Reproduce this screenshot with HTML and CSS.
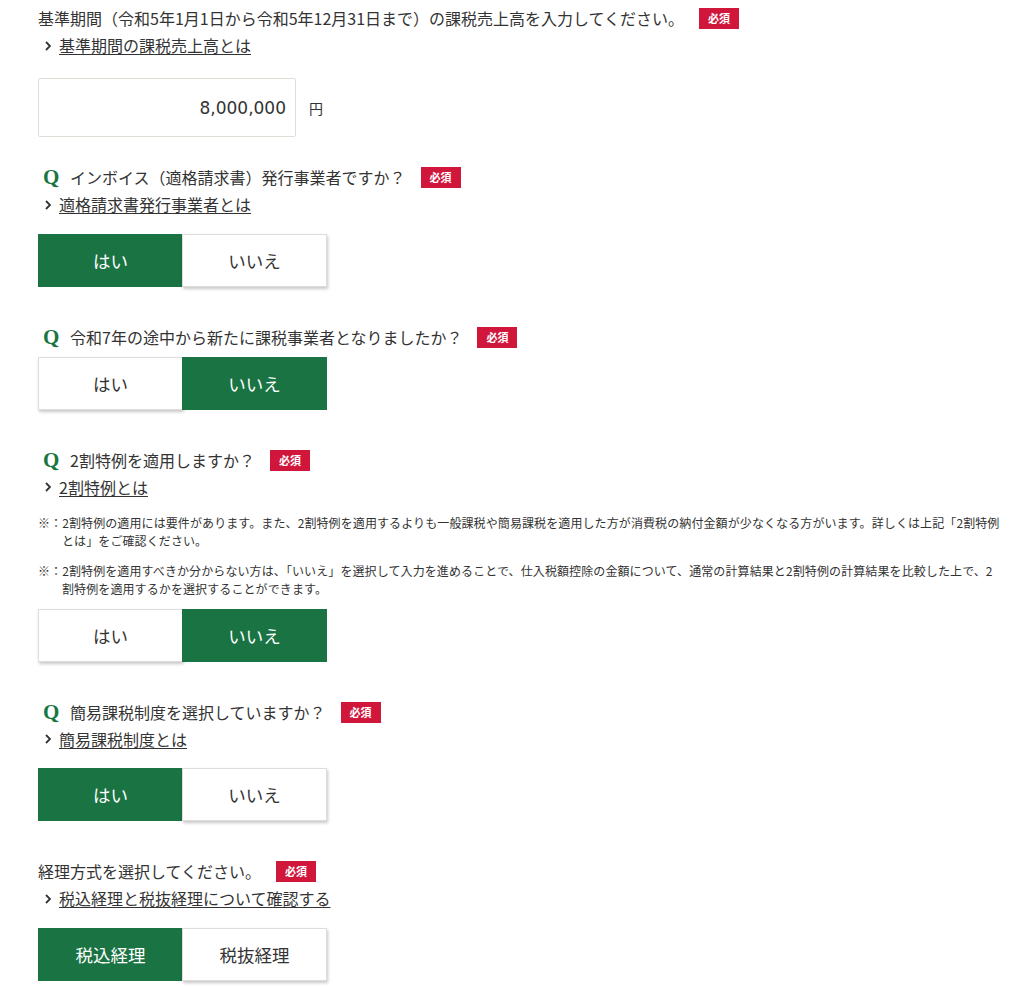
FILE: index.html
```html
<!DOCTYPE html>
<html>
<head>
    <title>消費税 入力</title>
    <link rel="stylesheet" href="styles.css">
</head>
<body>
    <div class="page">
        <div class="field first">
            <p class="label"><span>基準期間（令和5年1月1日から令和5年12月31日まで）の課税売上高を入力してください。</span><span class="badge">必須</span></p>
            <p class="more"><svg class="chev" width="6" height="10" viewBox="0 0 6 10"><polyline points="1,1 5,5 1,9" fill="none" stroke="#333" stroke-width="1.8"/></svg><a href="#">基準期間の課税売上高とは</a></p>
            <div class="amount">
                <input type="text" class="amount-input" value="8,000,000">
                <span class="unit">円</span>
            </div>
        </div>

        <div class="field gap-small">
            <p class="label"><span class="q">Q</span><span>インボイス（適格請求書）発行事業者ですか？</span><span class="badge">必須</span></p>
            <p class="more"><svg class="chev" width="6" height="10" viewBox="0 0 6 10"><polyline points="1,1 5,5 1,9" fill="none" stroke="#333" stroke-width="1.8"/></svg><a href="#">適格請求書発行事業者とは</a></p>
            <div class="choices">
                <button class="choice selected">はい</button>
                <button class="choice">いいえ</button>
            </div>
        </div>

        <div class="field">
            <p class="label"><span class="q">Q</span><span>令和7年の途中から新たに課税事業者となりましたか？</span><span class="badge">必須</span></p>
            <div class="choices">
                <button class="choice">はい</button>
                <button class="choice selected">いいえ</button>
            </div>
        </div>

        <div class="field">
            <p class="label"><span class="q">Q</span><span>2割特例を適用しますか？</span><span class="badge">必須</span></p>
            <p class="more"><svg class="chev" width="6" height="10" viewBox="0 0 6 10"><polyline points="1,1 5,5 1,9" fill="none" stroke="#333" stroke-width="1.8"/></svg><a href="#">2割特例とは</a></p>
            <div class="notes">
                <p class="note">※：2割特例の適用には要件があります。また、2割特例を適用するよりも一般課税や簡易課税を適用した方が消費税の納付金額が少なくなる方がいます。詳しくは上記「2割特例とは」をご確認ください。</p>
                <p class="note">※：2割特例を適用すべきか分からない方は、「いいえ」を選択して入力を進めることで、仕入税額控除の金額について、通常の計算結果と2割特例の計算結果を比較した上で、2割特例を適用するかを選択することができます。</p>
            </div>
            <div class="choices">
                <button class="choice">はい</button>
                <button class="choice selected">いいえ</button>
            </div>
        </div>

        <div class="field">
            <p class="label"><span class="q">Q</span><span>簡易課税制度を選択していますか？</span><span class="badge">必須</span></p>
            <p class="more"><svg class="chev" width="6" height="10" viewBox="0 0 6 10"><polyline points="1,1 5,5 1,9" fill="none" stroke="#333" stroke-width="1.8"/></svg><a href="#">簡易課税制度とは</a></p>
            <div class="choices">
                <button class="choice selected">はい</button>
                <button class="choice">いいえ</button>
            </div>
        </div>

        <div class="field">
            <p class="label"><span>経理方式を選択してください。</span><span class="badge">必須</span></p>
            <p class="more"><svg class="chev" width="6" height="10" viewBox="0 0 6 10"><polyline points="1,1 5,5 1,9" fill="none" stroke="#333" stroke-width="1.8"/></svg><a href="#">税込経理と税抜経理について確認する</a></p>
            <div class="choices">
                <button class="choice selected">税込経理</button>
                <button class="choice">税抜経理</button>
            </div>
        </div>
    </div>
</body>
</html>
```

FILE: styles.css
```css
body {
    margin: 0;
    font-family: "Noto Sans CJK JP", "Noto Sans", sans-serif;
    color: #333;
    background-color: #fff;
}
p {
    margin: 0;
}
.page {
    padding: 5px 22px 20px 38px;
}
.field {
    margin-top: 37px;
}
.field.first {
    margin-top: 0;
}
.field.gap-small {
    margin-top: 27px;
}
.label {
    display: flex;
    align-items: center;
    font-size: 16px;
    line-height: 27px;
}
.q {
    width: 27px;
    padding-left: 5px;
    color: #1a7543;
    font-family: "Liberation Serif", serif;
    font-weight: bold;
    font-size: 21px;
}
.badge {
    display: inline-block;
    width: 40px;
    height: 21px;
    line-height: 21px;
    margin-left: 15px;
    background-color: #d1163c;
    color: #fff;
    font-size: 11px;
    font-weight: bold;
    text-align: center;
}
.more {
    display: flex;
    align-items: center;
    font-size: 16px;
    line-height: 27px;
}
.chev {
    margin-left: 7px;
    margin-right: 8px;
}
.more a {
    color: #333;
    text-decoration: underline;
    text-underline-offset: 2px;
}
.amount {
    display: flex;
    align-items: center;
    margin-top: 19px;
}
.amount-input {
    width: 258px;
    height: 59px;
    box-sizing: border-box;
    padding: 0 9px 0 10px;
    border: 1px solid #e2ddd6;
    border-radius: 2px;
    font-family: "DejaVu Sans", sans-serif;
    font-size: 17px;
    color: #333;
    text-align: right;
}
.unit {
    margin-left: 13px;
    font-size: 14px;
}
.choices {
    display: flex;
    margin-top: 15.5px;
}
.label + .choices {
    margin-top: 6px;
}
.choice {
    width: 145px;
    height: 53px;
    box-sizing: border-box;
    border: 1px solid #e0ddd8;
    background-color: #fff;
    color: #333;
    font-family: "Noto Sans CJK JP", sans-serif;
    font-size: 17.5px;
    box-shadow: 1px 2px 3px rgba(0,0,0,0.22);
    cursor: pointer;
}
.choice + .choice {
    margin-left: -1px;
}
.choice.selected {
    background-color: #1a7343;
    border-color: #1a7343;
    color: #fff;
    box-shadow: none;
}
.notes {
    margin-top: 13px;
}
.note {
    font-size: 12px;
    line-height: 18px;
    letter-spacing: 0.1px;
    padding-left: 24px;
    text-indent: -24px;
}
.note + .note {
    margin-top: 12px;
}
.notes + .choices {
    margin-top: 11px;
}
```
